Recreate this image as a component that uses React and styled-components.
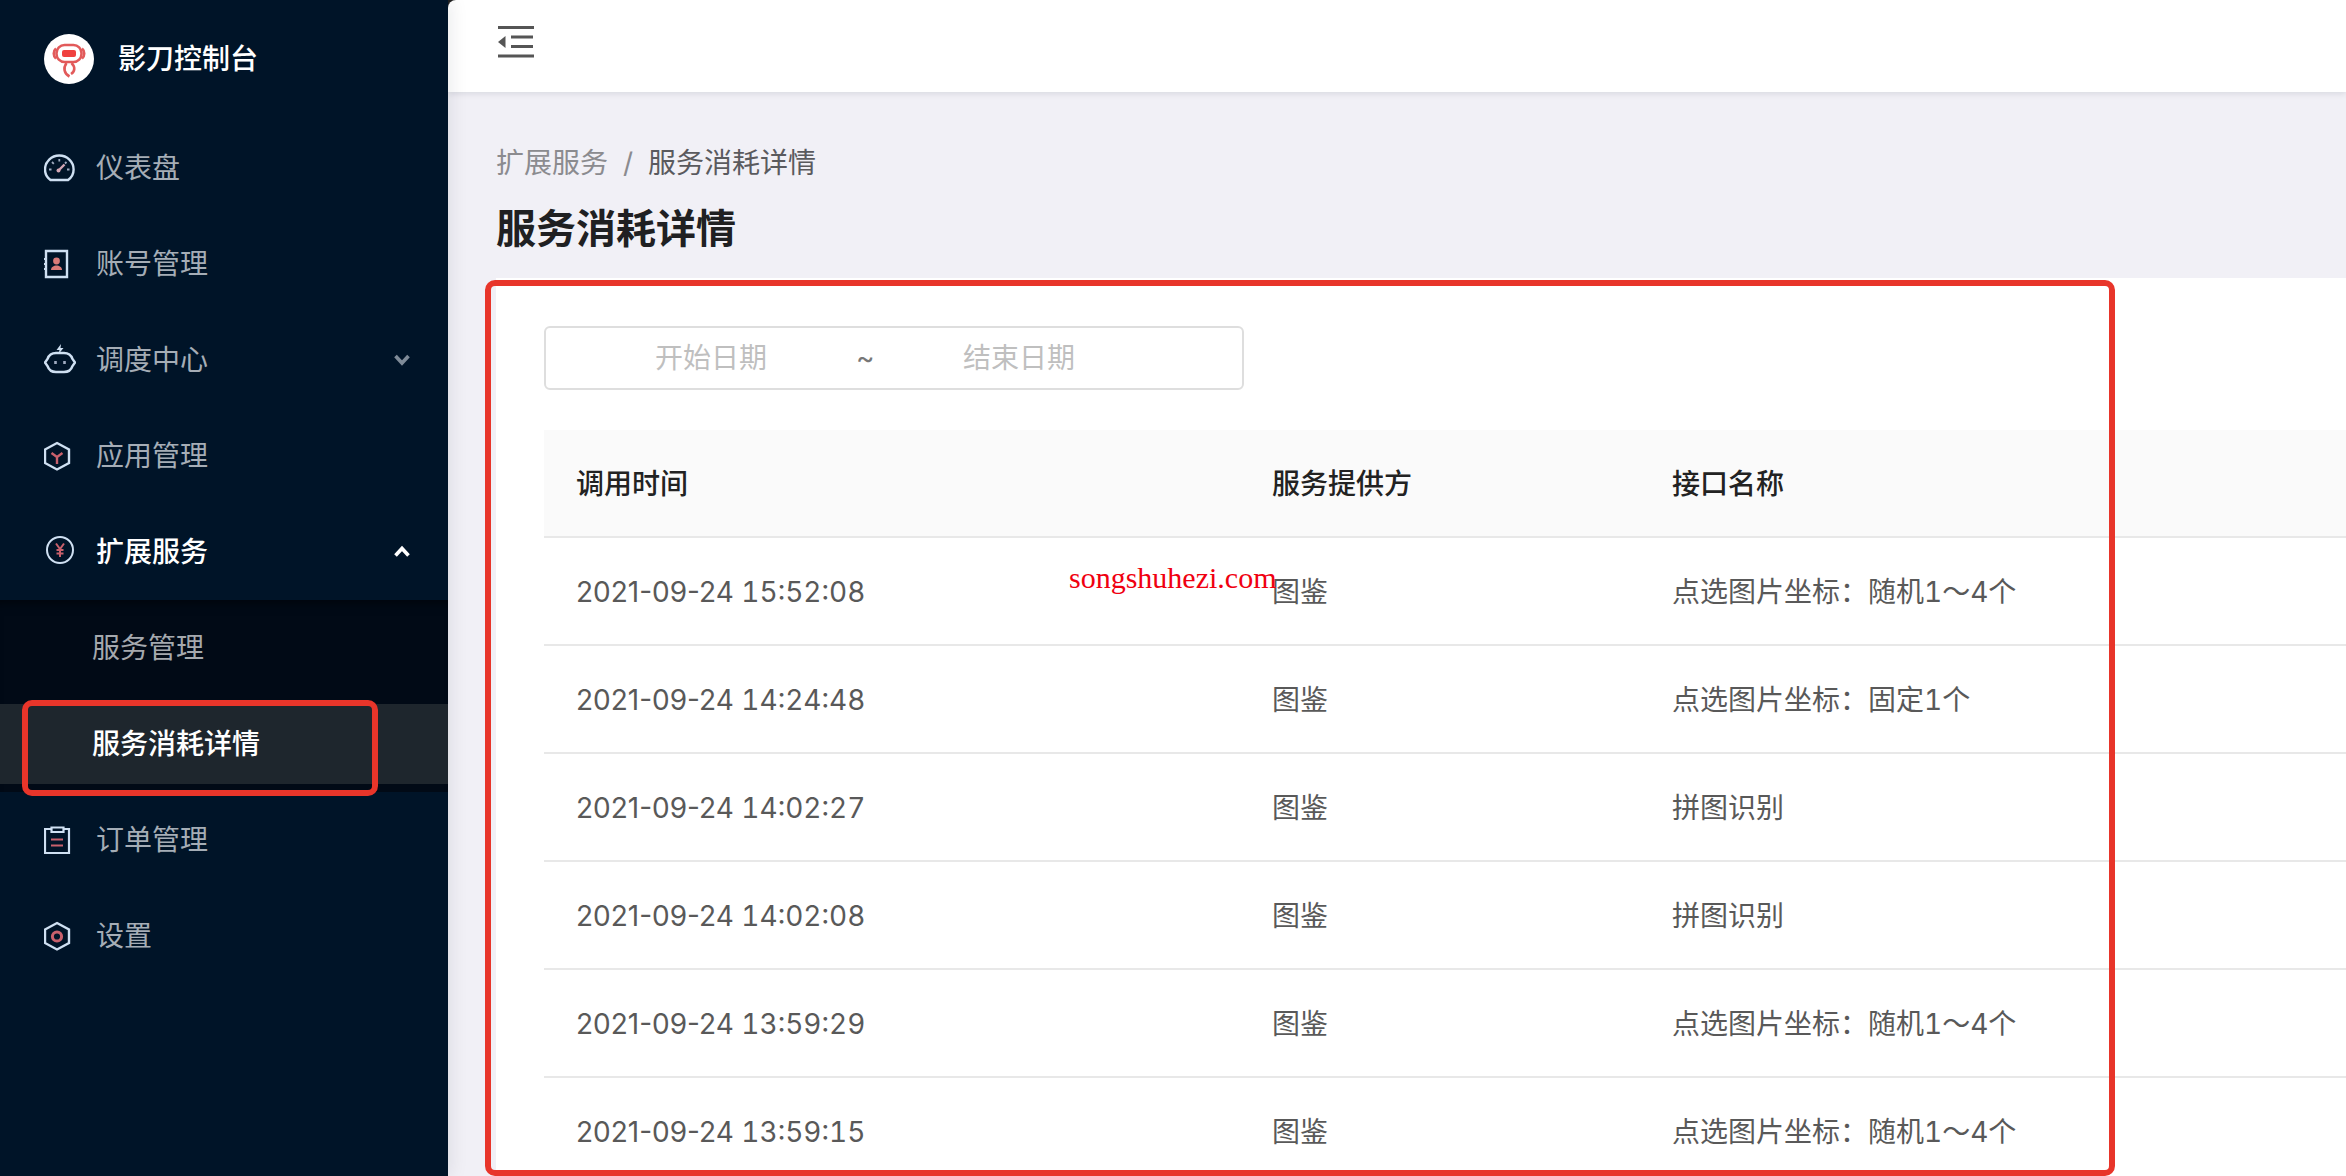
import React from "react";
import styled, { createGlobalStyle, css } from "styled-components";

const GlobalStyle = createGlobalStyle`
  *, *::before, *::after { box-sizing: border-box; }
  body {
    margin: 0;
    background: #f1f0f6;
    color: #595959;
    font-family: Inter, "Noto Sans CJK SC", sans-serif;
    font-size: 28px;
    line-height: 44px;
  }
`;

const Layout = styled.div`
  position: relative;
  display: flex;
  height: 100vh;
  overflow: hidden;
`;

const Sidebar = styled.aside`
  position: relative;
  z-index: 2;
  flex: 0 0 448px;
  background: #001428;
  box-shadow: 4px 0 16px rgba(0, 21, 41, 0.08);
`;

const Brand = styled.div`
  display: flex;
  align-items: center;
  gap: 24px;
  height: 118px;
  margin-bottom: 2px;
  padding-left: 44px;
  color: #fff;
  font-weight: 500;
`;

const MenuList = styled.ul`
  margin: 0;
  padding: 0;
  list-style: none;
`;

const itemStyles = css`
  display: flex;
  align-items: center;
  width: 100%;
  height: 80px;
  margin: 8px 0;
  border: 0;
  font: inherit;
  text-align: left;
  text-decoration: none;
  cursor: pointer;
`;

const MenuLink = styled.a`
  ${itemStyles}
  gap: 20px;
  padding: 0 36px 0 44px;
  color: #a5adb6;
`;

const MenuToggle = styled.button`
  ${itemStyles}
  gap: 20px;
  padding: 0 36px 0 44px;
  background: none;
  color: ${(p) => (p.$open ? "#fff" : "#a5adb6")};
  font-weight: ${(p) => (p.$open ? 500 : 400)};
`;

const MenuText = styled.span`
  flex: 1;
`;

const SubMenu = styled.ul`
  display: flow-root;
  margin: 0;
  padding: 0;
  list-style: none;
  background: #010a16;
  box-shadow: inset 0 12px 12px -10px rgba(0, 0, 0, 0.6);
`;

const SubItem = styled.li`
  display: flow-root;
  position: relative;
`;

const SubLink = styled.a`
  ${itemStyles}
  padding-left: 92px;
  background: ${(p) => (p.$active ? "#1e262d" : "transparent")};
  color: ${(p) => (p.$active ? "#fff" : "#a5a9ae")};
  font-weight: ${(p) => (p.$active ? 500 : 400)};
`;

const MenuEntry = styled.li`
  display: flow-root;
`;

const Main = styled.div`
  flex: 1;
  min-width: 0;
`;

const Corner = styled.div`
  background: #222;
`;

const Header = styled.header`
  position: relative;
  display: flex;
  align-items: center;
  height: 92px;
  padding: 0 48px 8px;
  border-top-left-radius: 8px;
  background: #fff;
  box-shadow: 0 2px 6px rgba(0, 21, 41, 0.1);
`;

const FoldButton = styled.button`
  display: flex;
  padding: 0;
  border: 0;
  background: none;
  cursor: pointer;
`;

const Heading = styled.div`
  padding: 49px 48px 21px;
`;

const Breadcrumb = styled.nav`
  display: flex;
  gap: 15px;
  color: #5a5a5e;
  a {
    color: #8b8b8f;
    text-decoration: none;
  }
`;

const Separator = styled.span`
  color: #8b8b8f;
`;

const Title = styled.h1`
  margin: 16px 0 0;
  color: #202022;
  font-size: 40px;
  font-weight: 600;
  line-height: 56px;
`;

const Card = styled.section`
  position: relative;
  margin-left: 48px;
  padding: 48px 0 0 48px;
  background: #fff;
`;

const RangePicker = styled.div`
  display: flex;
  align-items: center;
  width: 700px;
  height: 64px;
  padding: 0 78px 0 20px;
  border: 2px solid #dedede;
  border-radius: 6px;
  background: #fff;
`;

const DateInput = styled.input`
  flex: 1;
  min-width: 0;
  padding: 0;
  border: 0;
  outline: 0;
  background: none;
  color: #595959;
  font: inherit;
  text-align: center;
  &::placeholder {
    color: #bfbfbf;
    opacity: 1;
  }
`;

const Tilde = styled.span`
  width: 18px;
  text-align: center;
  color: #777;
`;

const Table = styled.table`
  width: 100%;
  margin-top: 40px;
  border-collapse: separate;
  border-spacing: 0;
  table-layout: fixed;
  font-variant-numeric: tabular-nums;
`;

const Col = styled.col`
  width: ${(p) => p.$width};
`;

const Th = styled.th`
  height: 108px;
  padding: 2px 32px 0;
  border-bottom: 2px solid #e8e8e8;
  background: #fafafa;
  color: #222;
  font-weight: 500;
  text-align: left;
`;

const Td = styled.td`
  height: 108px;
  padding: 2px 32px 0;
  border-bottom: 2px solid #e8e8e8;
  white-space: nowrap;
`;

const DatePart = styled.span`
  font-variant-numeric: normal;
`;

const Mark = styled.div`
  position: absolute;
  inset: ${(p) => p.$inset};
  z-index: 3;
  border: 6px solid #e8352a;
  border-radius: 10px;
  pointer-events: none;
`;

const Watermark = styled.span`
  position: absolute;
  top: 278px;
  left: 573px;
  color: #f00010;
  font-family: "Liberation Serif", serif;
  font-size: 30px;
`;

const Svg = ({ children }) => (
  <svg
    width="32"
    height="32"
    viewBox="0 0 32 32"
    fill="none"
    stroke="#cfe0f2"
    strokeWidth="2"
    aria-hidden="true"
  >
    {children}
  </svg>
);

const RED = "#c8606c";

const icons = {
  dashboard: (
    <Svg>
      <path d="M6.500 28C3 25.500 1 22 1 17.500a14.300 14 0 0 1 28.600 0c0 4.500-2 8-5.500 10.500z" strokeWidth="2.400" />
      <path d="M5 17.500h2.500M23 17.500h2.500M15.300 7v2.500M8 10l1.800 1.800M22.500 10l-1.500 1.500" stroke="#9fabc0" strokeWidth="1.800" />
      <path d="M14.500 18.500l6-6" stroke="#d3a6b4" strokeWidth="2.400" />
      <circle cx="14.500" cy="18.500" r="2" fill="#d3a6b4" stroke="none" />
    </Svg>
  ),
  account: (
    <Svg>
      <path d="M2 3h21v26H2z" strokeWidth="2.400" />
      <path d="M0 11h3M0 16h3M0 21h3" />
      <circle cx="12.500" cy="13" r="3.400" fill="#d97a78" stroke="none" />
      <path d="M7 22c0-6 11-6 11 0z" fill="#d97a78" stroke="none" />
    </Svg>
  ),
  robot: (
    <Svg>
      <path d="M12 9h8c4.500 0 7.500 3 8.500 6l2.500 3.500-2.500 3.500c-1 3-4 6-8.500 6h-8c-4.500 0-7.500-3-8.500-6L1 18.500 3.500 15c1-3 4-6 8.500-6z" strokeWidth="2.400" />
      <path d="M17 0l-4.500 6h3L14.500 10l5-6h-3z" fill="#cfe0f2" stroke="none" />
      <path d="M11.500 17v3M20.500 17v3" stroke="#9fabc0" strokeWidth="2.600" />
    </Svg>
  ),
  app: (
    <Svg>
      <path d="M13 3L25 9.500v13.500L13 29.500 1 23V9.500z" strokeWidth="2.400" />
      <path d="M7.500 13l5.500 4 5.500-4M13 17v7" stroke={RED} strokeWidth="2.400" />
    </Svg>
  ),
  service: (
    <Svg>
      <circle cx="16" cy="14" r="13" />
      <path d="M12 7.500l4 5.500 4-5.500M16 13v8M12.500 14h7M12.500 17.500h7" stroke={RED} />
    </Svg>
  ),
  order: (
    <Svg>
      <path d="M7 5H1v24h24V5h-5" strokeWidth="2.200" />
      <path d="M7.500 3.500h12V8h-12z" strokeWidth="2.200" />
      <path d="M7 15.500h12M7 21.500h12" stroke={RED} />
    </Svg>
  ),
  settings: (
    <Svg>
      <path d="M13 3L25 9.500v13.500L13 29.500 1 23V9.500z" strokeWidth="2.400" />
      <circle cx="13" cy="16.500" r="4.600" stroke={RED} strokeWidth="3" />
    </Svg>
  ),
};

const Logo = () => (
  <svg width="50" height="50" viewBox="0 0 50 50" fill="none" aria-hidden="true">
    <circle cx="25" cy="25" r="25" fill="#fff" />
    <g stroke="#e25a5a" strokeWidth="2.600">
      <rect x="12.500" y="11" width="25" height="17" rx="8" />
      <path d="M12 14.500c-3 2.500-3 7.500 0 10M38 14.500c3 2.500 3 7.500 0 10" />
      <path d="M22.500 29c-3.500 5-2.500 10.500 3 13.500M27.500 29c4 4 3.500 8.500-.5 11" />
    </g>
    <rect x="18" y="16" width="14" height="7" rx="2" fill="#f0413f" />
  </svg>
);

const Chevron = ({ up }) => (
  <svg width="20" height="20" viewBox="0 0 20 20" fill="none" stroke={up ? "#fff" : "#7f8b98"} strokeWidth="3.600" aria-hidden="true">
    <path d={up ? "M3.500 13.500l6.500-7 6.500 7" : "M3.500 6l6.500 7 6.500-7"} />
  </svg>
);

const FoldIcon = () => (
  <svg width="40" height="36" viewBox="0 0 40 36" fill="none" stroke="#555" strokeWidth="3" aria-hidden="true">
    <path d="M2 3.500h36M15 13h22M15 22.500h22M2 32h36" />
    <path d="M2 18l7.500-6v12z" fill="#555" stroke="none" />
  </svg>
);

const rows = [
  { date: "2021-09-24", time: "15:52:08", provider: "图鉴", api: "点选图片坐标：随机1～4个" },
  { date: "2021-09-24", time: "14:24:48", provider: "图鉴", api: "点选图片坐标：固定1个" },
  { date: "2021-09-24", time: "14:02:27", provider: "图鉴", api: "拼图识别" },
  { date: "2021-09-24", time: "14:02:08", provider: "图鉴", api: "拼图识别" },
  { date: "2021-09-24", time: "13:59:29", provider: "图鉴", api: "点选图片坐标：随机1～4个" },
  { date: "2021-09-24", time: "13:59:15", provider: "图鉴", api: "点选图片坐标：随机1～4个" },
];

const Item = ({ icon, children }) => (
  <MenuEntry>
    <MenuLink href="#">
      {icons[icon]}
      <MenuText>{children}</MenuText>
    </MenuLink>
  </MenuEntry>
);

export default function App() {
  return (
    <>
      <GlobalStyle />
      <Layout>
        <Sidebar>
          <Brand>
            <Logo />
            <span>影刀控制台</span>
          </Brand>
          <MenuList>
            <Item icon="dashboard">仪表盘</Item>
            <Item icon="account">账号管理</Item>
            <MenuEntry>
              <MenuToggle type="button" aria-expanded="false">
                {icons.robot}
                <MenuText>调度中心</MenuText>
                <Chevron />
              </MenuToggle>
            </MenuEntry>
            <Item icon="app">应用管理</Item>
            <MenuEntry>
              <MenuToggle type="button" aria-expanded="true" $open>
                {icons.service}
                <MenuText>扩展服务</MenuText>
                <Chevron up />
              </MenuToggle>
              <SubMenu>
                <SubItem>
                  <SubLink href="#">服务管理</SubLink>
                </SubItem>
                <SubItem>
                  <SubLink href="#" $active aria-current="page">
                    服务消耗详情
                  </SubLink>
                  <Mark $inset="4px 70px -4px 22px" />
                </SubItem>
              </SubMenu>
            </MenuEntry>
            <Item icon="order">订单管理</Item>
            <Item icon="settings">设置</Item>
          </MenuList>
        </Sidebar>
        <Main>
          <Corner>
            <Header>
              <FoldButton type="button" aria-label="收起菜单">
                <FoldIcon />
              </FoldButton>
            </Header>
          </Corner>
          <Heading>
            <Breadcrumb>
              <a href="#">扩展服务</a>
              <Separator>/</Separator>
              <span>服务消耗详情</span>
            </Breadcrumb>
            <Title>服务消耗详情</Title>
          </Heading>
          <Card>
            <RangePicker>
              <DateInput placeholder="开始日期" aria-label="开始日期" />
              <Tilde>~</Tilde>
              <DateInput placeholder="结束日期" aria-label="结束日期" />
            </RangePicker>
            <Table>
              <colgroup>
                <Col $width="696px" />
                <Col $width="400px" />
                <Col $width="auto" />
              </colgroup>
              <thead>
                <tr>
                  <Th>调用时间</Th>
                  <Th>服务提供方</Th>
                  <Th>接口名称</Th>
                </tr>
              </thead>
              <tbody>
                {rows.map((row) => (
                  <tr key={row.time}>
                    <Td>
                      <time>
                        <DatePart>{row.date}</DatePart> {row.time}
                      </time>
                    </Td>
                    <Td>{row.provider}</Td>
                    <Td>{row.api}</Td>
                  </tr>
                ))}
              </tbody>
            </Table>
            <Watermark>songshuhezi.com</Watermark>
          </Card>
        </Main>
        <Mark $inset="280px 231px 0 485px" />
      </Layout>
    </>
  );
}
